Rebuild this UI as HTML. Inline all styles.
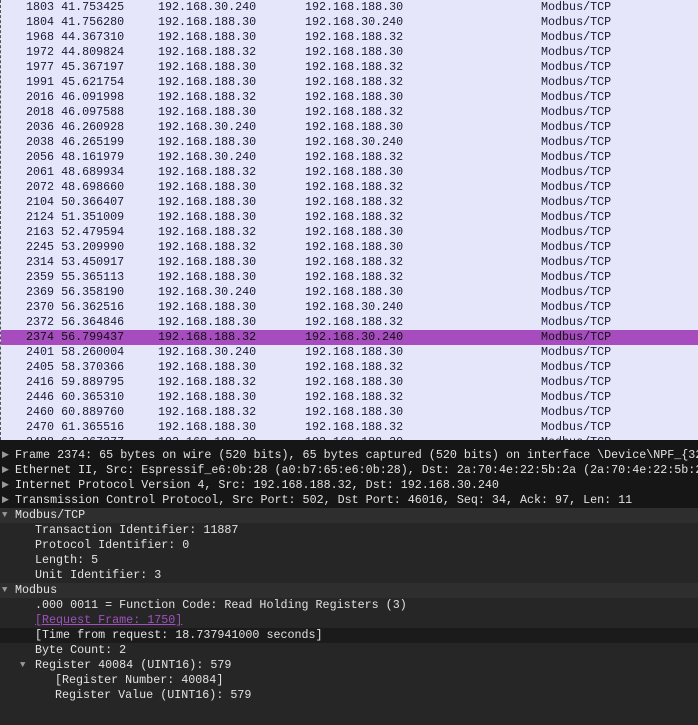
<!DOCTYPE html>
<html><head><style>
body{margin:0;width:698px;height:725px;overflow:hidden;background:#262626;font-family:"Liberation Mono",monospace;font-size:11.7px;}
#list{position:absolute;left:0;top:0;width:698px;height:440px;background:#e6e6fa;overflow:hidden;border-left:1px dashed #555;box-sizing:border-box}
.r{position:absolute;left:0;width:698px;height:15px;line-height:15px;color:#1a1a3a;white-space:pre}
.r span{position:absolute}
.sel{background:#a64cbf;color:#111}
#det{position:absolute;left:0;top:440px;width:698px;height:285px;background:#262626}
.d{position:absolute;left:0;width:698px;height:15px;line-height:15px;color:#e2e2e2;white-space:pre}
.d span{position:absolute}
.top{background:#161616}
.hd{background:#2e2e2e}
.dk{background:#1b1b1b}
.ar{position:absolute;left:2px;color:#9a9a9a;font-size:9px}
</style></head><body>
<div id="list">
<div class="r" style="top:0"><span style="left:25px">1803 41.753425</span><span style="left:157px">192.168.30.240</span><span style="left:304px">192.168.188.30</span><span style="left:540px">Modbus/TCP</span></div>
<div class="r" style="top:15px"><span style="left:25px">1804 41.756280</span><span style="left:157px">192.168.188.30</span><span style="left:304px">192.168.30.240</span><span style="left:540px">Modbus/TCP</span></div>
<div class="r" style="top:30px"><span style="left:25px">1968 44.367310</span><span style="left:157px">192.168.188.30</span><span style="left:304px">192.168.188.32</span><span style="left:540px">Modbus/TCP</span></div>
<div class="r" style="top:45px"><span style="left:25px">1972 44.809824</span><span style="left:157px">192.168.188.32</span><span style="left:304px">192.168.188.30</span><span style="left:540px">Modbus/TCP</span></div>
<div class="r" style="top:60px"><span style="left:25px">1977 45.367197</span><span style="left:157px">192.168.188.30</span><span style="left:304px">192.168.188.32</span><span style="left:540px">Modbus/TCP</span></div>
<div class="r" style="top:75px"><span style="left:25px">1991 45.621754</span><span style="left:157px">192.168.188.30</span><span style="left:304px">192.168.188.32</span><span style="left:540px">Modbus/TCP</span></div>
<div class="r" style="top:90px"><span style="left:25px">2016 46.091998</span><span style="left:157px">192.168.188.32</span><span style="left:304px">192.168.188.30</span><span style="left:540px">Modbus/TCP</span></div>
<div class="r" style="top:105px"><span style="left:25px">2018 46.097588</span><span style="left:157px">192.168.188.30</span><span style="left:304px">192.168.188.32</span><span style="left:540px">Modbus/TCP</span></div>
<div class="r" style="top:120px"><span style="left:25px">2036 46.260928</span><span style="left:157px">192.168.30.240</span><span style="left:304px">192.168.188.30</span><span style="left:540px">Modbus/TCP</span></div>
<div class="r" style="top:135px"><span style="left:25px">2038 46.265199</span><span style="left:157px">192.168.188.30</span><span style="left:304px">192.168.30.240</span><span style="left:540px">Modbus/TCP</span></div>
<div class="r" style="top:150px"><span style="left:25px">2056 48.161979</span><span style="left:157px">192.168.30.240</span><span style="left:304px">192.168.188.32</span><span style="left:540px">Modbus/TCP</span></div>
<div class="r" style="top:165px"><span style="left:25px">2061 48.689934</span><span style="left:157px">192.168.188.32</span><span style="left:304px">192.168.188.30</span><span style="left:540px">Modbus/TCP</span></div>
<div class="r" style="top:180px"><span style="left:25px">2072 48.698660</span><span style="left:157px">192.168.188.30</span><span style="left:304px">192.168.188.32</span><span style="left:540px">Modbus/TCP</span></div>
<div class="r" style="top:195px"><span style="left:25px">2104 50.366407</span><span style="left:157px">192.168.188.30</span><span style="left:304px">192.168.188.32</span><span style="left:540px">Modbus/TCP</span></div>
<div class="r" style="top:210px"><span style="left:25px">2124 51.351009</span><span style="left:157px">192.168.188.30</span><span style="left:304px">192.168.188.32</span><span style="left:540px">Modbus/TCP</span></div>
<div class="r" style="top:225px"><span style="left:25px">2163 52.479594</span><span style="left:157px">192.168.188.32</span><span style="left:304px">192.168.188.30</span><span style="left:540px">Modbus/TCP</span></div>
<div class="r" style="top:240px"><span style="left:25px">2245 53.209990</span><span style="left:157px">192.168.188.32</span><span style="left:304px">192.168.188.30</span><span style="left:540px">Modbus/TCP</span></div>
<div class="r" style="top:255px"><span style="left:25px">2314 53.450917</span><span style="left:157px">192.168.188.30</span><span style="left:304px">192.168.188.32</span><span style="left:540px">Modbus/TCP</span></div>
<div class="r" style="top:270px"><span style="left:25px">2359 55.365113</span><span style="left:157px">192.168.188.30</span><span style="left:304px">192.168.188.32</span><span style="left:540px">Modbus/TCP</span></div>
<div class="r" style="top:285px"><span style="left:25px">2369 56.358190</span><span style="left:157px">192.168.30.240</span><span style="left:304px">192.168.188.30</span><span style="left:540px">Modbus/TCP</span></div>
<div class="r" style="top:300px"><span style="left:25px">2370 56.362516</span><span style="left:157px">192.168.188.30</span><span style="left:304px">192.168.30.240</span><span style="left:540px">Modbus/TCP</span></div>
<div class="r" style="top:315px"><span style="left:25px">2372 56.364846</span><span style="left:157px">192.168.188.30</span><span style="left:304px">192.168.188.32</span><span style="left:540px">Modbus/TCP</span></div>
<div class="r sel" style="top:330px"><span style="left:25px">2374 56.799437</span><span style="left:157px">192.168.188.32</span><span style="left:304px">192.168.30.240</span><span style="left:540px">Modbus/TCP</span></div>
<div class="r" style="top:345px"><span style="left:25px">2401 58.260004</span><span style="left:157px">192.168.30.240</span><span style="left:304px">192.168.188.30</span><span style="left:540px">Modbus/TCP</span></div>
<div class="r" style="top:360px"><span style="left:25px">2405 58.370366</span><span style="left:157px">192.168.188.30</span><span style="left:304px">192.168.188.32</span><span style="left:540px">Modbus/TCP</span></div>
<div class="r" style="top:375px"><span style="left:25px">2416 59.889795</span><span style="left:157px">192.168.188.32</span><span style="left:304px">192.168.188.30</span><span style="left:540px">Modbus/TCP</span></div>
<div class="r" style="top:390px"><span style="left:25px">2446 60.365310</span><span style="left:157px">192.168.188.30</span><span style="left:304px">192.168.188.32</span><span style="left:540px">Modbus/TCP</span></div>
<div class="r" style="top:405px"><span style="left:25px">2460 60.889760</span><span style="left:157px">192.168.188.32</span><span style="left:304px">192.168.188.30</span><span style="left:540px">Modbus/TCP</span></div>
<div class="r" style="top:420px"><span style="left:25px">2470 61.365516</span><span style="left:157px">192.168.188.30</span><span style="left:304px">192.168.188.32</span><span style="left:540px">Modbus/TCP</span></div>
<div class="r" style="top:435px"><span style="left:25px">2488 62.367377</span><span style="left:157px">192.168.188.30</span><span style="left:304px">192.168.188.30</span><span style="left:540px">Modbus/TCP</span></div>
</div>
<div id="det">
<div class="d top" style="top:0;height:8px"></div>
<div class="d top" style="top:8px"><span class="ar">▶</span><span style="left:15px">Frame 2374: 65 bytes on wire (520 bits), 65 bytes captured (520 bits) on interface \Device\NPF_{32</span></div>
<div class="d top" style="top:23px"><span class="ar">▶</span><span style="left:15px">Ethernet II, Src: Espressif_e6:0b:28 (a0:b7:65:e6:0b:28), Dst: 2a:70:4e:22:5b:2a (2a:70:4e:22:5b:2</span></div>
<div class="d top" style="top:38px"><span class="ar">▶</span><span style="left:15px">Internet Protocol Version 4, Src: 192.168.188.32, Dst: 192.168.30.240</span></div>
<div class="d top" style="top:53px"><span class="ar">▶</span><span style="left:15px">Transmission Control Protocol, Src Port: 502, Dst Port: 46016, Seq: 34, Ack: 97, Len: 11</span></div>
<div class="d hd" style="top:68px"><span class="ar">▼</span><span style="left:15px">Modbus/TCP</span></div>
<div class="d" style="top:83px"><span style="left:35px">Transaction Identifier: 11887</span></div>
<div class="d" style="top:98px"><span style="left:35px">Protocol Identifier: 0</span></div>
<div class="d" style="top:113px"><span style="left:35px">Length: 5</span></div>
<div class="d" style="top:128px"><span style="left:35px">Unit Identifier: 3</span></div>
<div class="d hd" style="top:143px"><span class="ar">▼</span><span style="left:15px">Modbus</span></div>
<div class="d" style="top:158px"><span style="left:35px">.000 0011 = Function Code: Read Holding Registers (3)</span></div>
<div class="d" style="top:173px"><span style="left:35px;color:#a24fc0;text-decoration:underline">[Request Frame: 1750]</span></div>
<div class="d dk" style="top:188px"><span style="left:35px">[Time from request: 18.737941000 seconds]</span></div>
<div class="d" style="top:203px"><span style="left:35px">Byte Count: 2</span></div>
<div class="d" style="top:218px"><span class="ar" style="left:20px">▼</span><span style="left:35px">Register 40084 (UINT16): 579</span></div>
<div class="d" style="top:233px"><span style="left:55px">[Register Number: 40084]</span></div>
<div class="d" style="top:248px"><span style="left:55px">Register Value (UINT16): 579</span></div>
</div>
</body></html>
